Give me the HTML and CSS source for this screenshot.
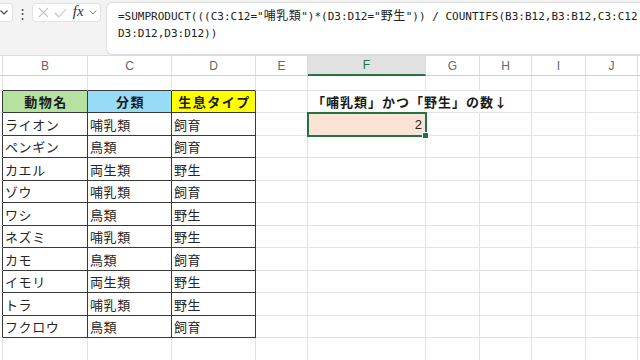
FILE: index.html
```html
<!DOCTYPE html>
<html>
<head>
    <title>Sheet - 動物</title>
    <link rel="stylesheet" href="styles.css">
</head>
<body>
    <div class="formula-bar">
        <div class="name-box">
            <svg width="8" height="5" viewBox="0 0 8 5"><path d="M0.5 0.5L4 4L7.5 0.5" stroke="#444" stroke-width="1.2" fill="none"/></svg>
        </div>
        <div class="dots">⋮</div>
        <div class="edit-box">
            <svg width="11" height="11" viewBox="0 0 11 11"><path d="M1 1L10 10M10 1L1 10" stroke="#c4c4c4" stroke-width="1.1" fill="none"/></svg>
            <svg width="13" height="10" viewBox="0 0 13 10"><path d="M1 5L4.8 9L12 1" stroke="#c4c4c4" stroke-width="1.1" fill="none"/></svg>
            <span class="fx">fx</span>
            <svg width="8" height="5" viewBox="0 0 8 5"><path d="M0.5 0.5L4 4L7.5 0.5" stroke="#8a8a8a" stroke-width="1" fill="none"/></svg>
        </div>
        <div class="formula-box">
            =SUMPRODUCT(((C3:C12="<span class="jp">哺乳類</span>")*(D3:D12="<span class="jp">野生</span>")) / COUNTIFS(B3:B12,B3:B12,C3:C12<br>D3:D12,D3:D12))
        </div>
    </div>

    <div class="sheet" id="sheet"></div>

    <script>
        const letters = ['', 'B', 'C', 'D', 'E', 'F', 'G', 'H', 'I', 'J', ''];
        const animals = [
            ['ライオン', '哺乳類', '飼育'],
            ['ペンギン', '鳥類', '飼育'],
            ['カエル', '両生類', '野生'],
            ['ゾウ', '哺乳類', '飼育'],
            ['ワシ', '鳥類', '野生'],
            ['ネズミ', '哺乳類', '野生'],
            ['カモ', '鳥類', '飼育'],
            ['イモリ', '両生類', '野生'],
            ['トラ', '哺乳類', '野生'],
            ['フクロウ', '鳥類', '飼育']
        ];
        const headFills = ['', 'head-green', 'head-blue', 'head-yellow'];

        function buildSheet() {
            let html = letters.map((l, c) =>
                `<div class="hdr${l === 'F' ? ' active' : ''}">${l}</div>`
            ).join('');

            // rows 1..13 of the sheet
            for (let r = 1; r <= 13; r++) {
                for (let c = 0; c < letters.length; c++) {
                    let cls = 'cell';
                    let text = '';
                    const inTable = r >= 2 && r <= 12;

                    if (c >= 1 && c <= 3) {
                        if (r === 1) cls += ' tbl-top';
                        if (r === 2) { cls += ' tbl th ' + headFills[c]; text = ['動物名', '分類', '生息タイプ'][c - 1]; }
                        if (r >= 3 && r <= 12) { cls += ' tbl'; text = animals[r - 3][c - 1]; }
                    }
                    if (c === 0 && inTable) cls += ' tbl-left';
                    if (r === 2 && c === 5) { cls += ' label no-right'; text = '「哺乳類」かつ「野生」の数↓'; }
                    if (r === 2 && c === 6) cls += ' no-right';
                    if (r === 3 && c === 5) { cls += ' sel'; text = '2'; }

                    html += `<div class="${cls}">${text}</div>`;
                }
            }
            document.getElementById('sheet').innerHTML = html;
        }

        buildSheet();
    </script>
</body>
</html>
```

FILE: styles.css
```css
body {
    margin: 0;
    width: 640px;
    height: 360px;
    overflow: hidden;
    background: #fff;
    font-family: "Noto Sans CJK JP", sans-serif;
    color: #262626;
}
.formula-bar {
    display: flex;
    align-items: flex-start;
    height: 56px;
    box-sizing: border-box;
    padding-top: 3px;
    background: #f3f3f3;
    border-bottom: 1px solid #dadada;
}
.name-box {
    flex-shrink: 0;
    width: 13px;
    height: 19px;
    box-sizing: border-box;
    display: flex;
    align-items: center;
    background: #fff;
    border: 1px solid #e2e2e2;
    border-left: none;
    border-radius: 0 4px 4px 0;
}
.dots {
    flex-shrink: 0;
    width: 18px;
    height: 19px;
    line-height: 19px;
    text-align: center;
    font-size: 13px;
    color: #444;
}
.edit-box {
    flex-shrink: 0;
    width: 69px;
    height: 19px;
    box-sizing: border-box;
    margin-left: 1px;
    padding: 0 3px 0 5px;
    display: flex;
    align-items: center;
    justify-content: space-between;
    background: #fff;
    border: 1px solid #e2e2e2;
    border-radius: 4px;
}
.fx {
    font-family: "Liberation Serif", serif;
    font-style: italic;
    font-size: 15px;
    color: #333;
    margin-top: -2px;
}
.formula-box {
    flex: 1;
    min-width: 0;
    height: 53px;
    box-sizing: border-box;
    margin: -1px 0 0 5px;
    padding: 3px 0 0 11px;
    background: #fff;
    border: 1px solid #dcdcdc;
    border-right: none;
    border-radius: 6px 0 0 6px;
    font-family: "DejaVu Sans Mono", monospace;
    font-size: 11px;
    line-height: 17px;
    white-space: nowrap;
    color: #222;
}
.formula-box .jp {
    font-family: "Noto Sans CJK JP", sans-serif;
    font-size: 12px;
    letter-spacing: 0.5px;
}
.sheet {
    display: grid;
    grid-template-columns: 3px 85px 84px 84px 52px 118px 54px 52px 54px 52px 1fr;
    grid-template-rows: 20px 15px 22px 23px 22px 23px 22px 23px 22px 23px 22px 23px 22px 23px;
}
.hdr {
    box-sizing: border-box;
    display: flex;
    align-items: center;
    justify-content: center;
    border-right: 1px solid #dcdcdc;
    border-bottom: 1px solid #cfcfcf;
    font-family: "Liberation Sans", sans-serif;
    font-size: 12px;
    color: #666;
}
.hdr.active {
    background: #e1e1e1;
    color: #217346;
    border-bottom: 2px solid #217346;
}
.cell {
    box-sizing: border-box;
    display: flex;
    align-items: center;
    padding-left: 2px;
    border-right: 1px solid #e3e3e3;
    border-bottom: 1px solid #e3e3e3;
    font-size: 13px;
    letter-spacing: 0.6px;
    white-space: nowrap;
}
.cell.tbl {
    border-right-color: #3a3a3a;
    border-bottom-color: #3a3a3a;
}
.cell.tbl-top {
    border-bottom-color: #3a3a3a;
}
.cell.tbl-left {
    border-right-color: #3a3a3a;
}
.cell.th {
    justify-content: center;
    font-weight: bold;
    letter-spacing: 1.5px;
    color: #1a1a1a;
}
.head-green {
    background: #b5e2a1;
}
.head-blue {
    background: #97dbf7;
}
.head-yellow {
    background: #ffff00;
}
.cell.label {
    overflow: visible;
    padding-left: 4px;
    font-weight: bold;
    letter-spacing: 1px;
    color: #1a1a1a;
}
.cell.no-right {
    border-right-color: transparent;
}
.cell.sel {
    position: relative;
    z-index: 1;
    justify-content: flex-end;
    padding-right: 3px;
    background: #fbe3d6;
    outline: 2px solid #217346;
    outline-offset: -1px;
    font-family: "Liberation Sans", sans-serif;
    font-size: 13px;
    letter-spacing: 0;
}
.cell.sel::after {
    content: "";
    position: absolute;
    right: -4px;
    bottom: -4px;
    width: 5px;
    height: 5px;
    background: #217346;
    border: 1px solid #fff;
}
```
